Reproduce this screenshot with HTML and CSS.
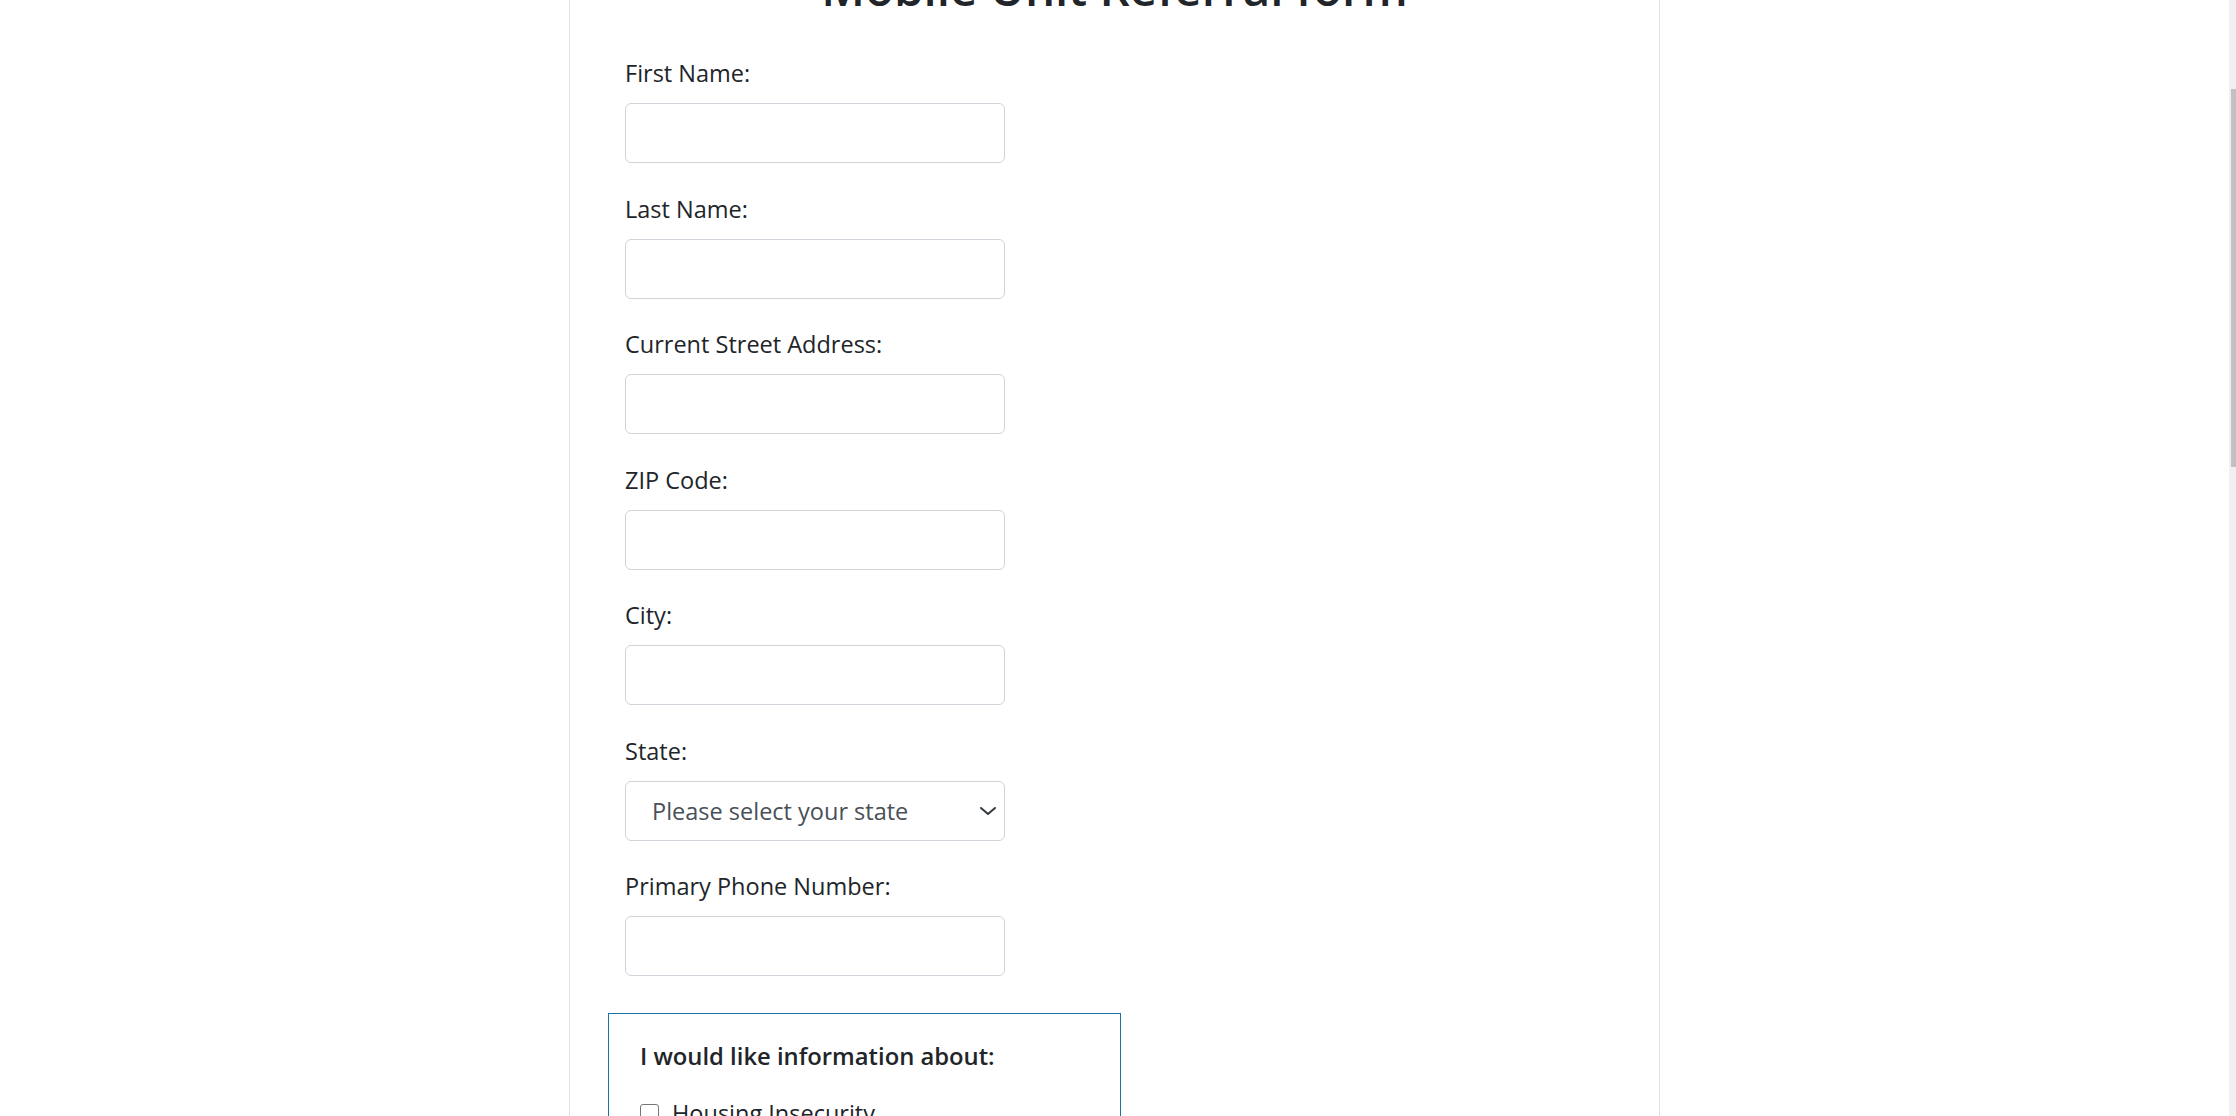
FILE: index.html
```html
<!DOCTYPE html>
<html lang="en">
<head>
<meta charset="utf-8">
<title>Mobile Unit Referral form</title>
<link rel="stylesheet" href="styles.css">
</head>
<body>
<main class="page">
  <div class="card">
    <h1 class="title">Mobile Unit Referral form</h1>
    <form class="form">
      <div class="group">
        <label class="label" for="first">First Name:</label>
        <input class="control" id="first" type="text">
      </div>
      <div class="group">
        <label class="label" for="last">Last Name:</label>
        <input class="control" id="last" type="text">
      </div>
      <div class="group">
        <label class="label" for="street">Current Street Address:</label>
        <input class="control" id="street" type="text">
      </div>
      <div class="group">
        <label class="label" for="zip">ZIP Code:</label>
        <input class="control" id="zip" type="text">
      </div>
      <div class="group">
        <label class="label" for="city">City:</label>
        <input class="control" id="city" type="text">
      </div>
      <div class="group">
        <label class="label" for="state">State:</label>
        <div class="select">
          <span class="select-text">Please select your state</span>
          <svg class="chevron" width="16" height="8" viewBox="0 0 16 8"><path d="M1 1l7 6 7-6" fill="none" stroke="#343a40" stroke-width="2" stroke-linecap="round" stroke-linejoin="round"/></svg>
        </div>
      </div>
      <div class="group">
        <label class="label" for="phone">Primary Phone Number:</label>
        <input class="control" id="phone" type="text">
      </div>
      <fieldset class="interests">
        <legend class="legend">I would like information about:</legend>
        <div class="checks">
          <label class="check"><span class="box"></span><span>Housing Insecurity</span></label>
          <label class="check"><span class="box"></span><span>Food Insecurity</span></label>
          <label class="check"><span class="box"></span><span>Health Insurance</span></label>
          <label class="check"><span class="box"></span><span>Employment</span></label>
        </div>
      </fieldset>
    </form>
  </div>
</main>
<div class="scrollbar"><div class="thumb"></div></div>
</body>
</html>
```
FILE: styles.css
```css
html, body {
  margin: 0;
  padding: 0;
  background: #fff;
  overflow: hidden;
  height: 100%;
}
body {
  font-family: "Open Sans", "Noto Sans", sans-serif;
  color: #212529;
}
.page {
  width: calc(100% - 7px);
  margin-top: -41.5px;
}
.card {
  width: 1091px;
  box-sizing: border-box;
  margin: 0 auto;
  border-left: 1px solid #dee2e6;
  border-right: 1px solid #dee2e6;
  padding: 0 0 200px 0;
  min-height: 1400px;
}
.title {
  margin: 0 0 39.5px 0;
  text-align: center;
  font-size: 47.5px;
  line-height: 57px;
  font-weight: 600;
  color: #212529;
}
.form {
  padding-left: 55px;
  display: flex;
  flex-direction: column;
  align-items: flex-start;
}
.group {
  display: flex;
  flex-direction: column;
  margin-bottom: 27.5px;
}
.label {
  font-size: 23.5px;
  line-height: 36px;
  margin-bottom: 12px;
}
.control, .select {
  box-sizing: border-box;
  width: 380px;
  height: 60px;
  border: 1px solid #ced4da;
  border-radius: 6px;
  background: #fff;
  font: inherit;
  padding: 0 18px;
}
.select {
  display: flex;
  align-items: center;
  justify-content: space-between;
  padding: 0 8px 0 26px;
}
.select-text {
  font-size: 23.5px;
  color: #495057;
}
.chevron {
  display: block;
}
.interests {
  margin: 9px 0 0 -17px;
  width: 513px;
  box-sizing: border-box;
  border: 1px solid #1a73a8;
  padding: 24.5px 31px 30px 31px;
}
.legend {
  float: left;
  width: 100%;
  padding: 0;
  margin: 0 0 21px 0;
  font-size: 23.8px;
  line-height: 36px;
  font-weight: 600;
}
.checks {
  clear: both;
  display: flex;
  flex-direction: column;
  gap: 10px;
}
.check {
  display: flex;
  align-items: center;
  gap: 13px;
  font-size: 23.5px;
  line-height: 36px;
}
.box {
  width: 19px;
  height: 19px;
  box-sizing: border-box;
  border: 1.5px solid #767676;
  border-radius: 3px;
  background: #fff;
}
.scrollbar {
  position: fixed;
  top: 0;
  right: 0;
  width: 7px;
  height: 100%;
  background: #f0f0f0;
}
.thumb {
  position: absolute;
  left: 2px;
  top: 89px;
  width: 5px;
  height: 378px;
  background: #c1c1c1;
}
```
